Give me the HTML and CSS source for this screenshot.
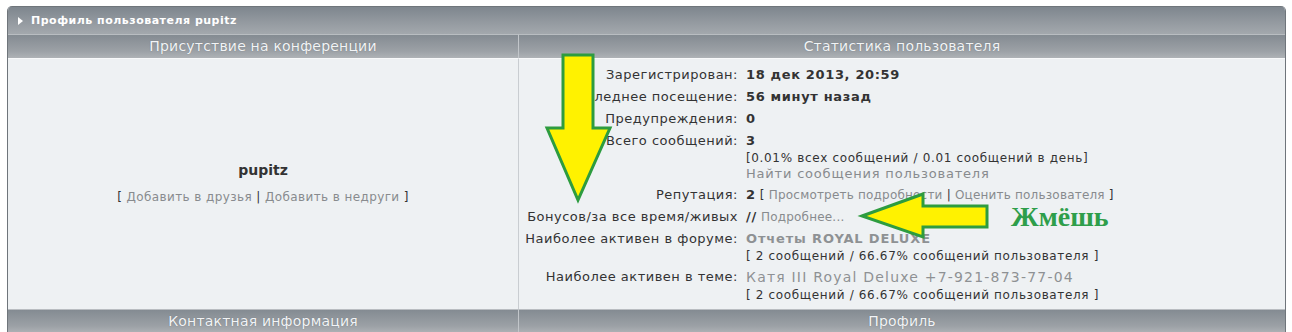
FILE: index.html
```html
<!DOCTYPE html>
<html lang="ru">

<head>
    <meta charset="UTF-8">
    <title>Профиль пользователя pupitz</title>
    <link rel="stylesheet" href="styles.css">
</head>

<body>
    <div class="page">
        <div class="profile">
            <div class="maintitle"><span class="tri"></span>Профиль пользователя pupitz</div>

            <div class="grid">
                <div class="head">Присутствие на конференции</div>
                <div class="head">Статистика пользователя</div>

                <div class="cell presence">
                    <div class="nick">pupitz</div>
                    <div class="links">[ <a href="#">Добавить в друзья</a> | <a href="#">Добавить в недруги</a> ]</div>
                </div>

                <div class="cell stats">
                    <div class="row">
                        <div class="label">Зарегистрирован:</div>
                        <div class="value"><b>18 дек 2013, 20:59</b></div>
                    </div>
                    <div class="row">
                        <div class="label">Последнее посещение:</div>
                        <div class="value"><b>56 минут назад</b></div>
                    </div>
                    <div class="row">
                        <div class="label">Предупреждения:</div>
                        <div class="value"><b>0</b></div>
                    </div>
                    <div class="row">
                        <div class="label">Всего сообщений:</div>
                        <div class="value">
                            <b>3</b>
                            <div class="sub">[0.01% всех сообщений / 0.01 сообщений в день]</div>
                            <div class="sub"><a class="find" href="#">Найти сообщения пользователя</a></div>
                        </div>
                    </div>
                    <div class="row">
                        <div class="label">Репутация:</div>
                        <div class="value"><b>2</b> <span class="small">[ <a href="#">Просмотреть подробности</a> | <a href="#">Оценить пользователя</a> ]</span></div>
                    </div>
                    <div class="row">
                        <div class="label">Бонусов/за все время/живых</div>
                        <div class="value"><b>//</b> <a class="small" href="#">Подробнее...</a></div>
                    </div>
                    <div class="row">
                        <div class="label">Наиболее активен в форуме:</div>
                        <div class="value">
                            <a class="strong" href="#">Отчеты ROYAL DELUXE</a>
                            <div class="sub">[ 2 сообщений / 66.67% сообщений пользователя ]</div>
                        </div>
                    </div>
                    <div class="row">
                        <div class="label">Наиболее активен в теме:</div>
                        <div class="value">
                            <a class="topic" href="#">Катя III Royal Deluxe +7-921-873-77-04</a>
                            <div class="sub">[ 2 сообщений / 66.67% сообщений пользователя ]</div>
                        </div>
                    </div>
                </div>

                <div class="head">Контактная информация</div>
                <div class="head">Профиль</div>
            </div>
        </div>

        <!-- annotation arrows drawn over the screenshot -->
        <svg class="marks" width="1292" height="332" viewBox="0 0 1292 332">
            <polygon points="563,55 593,55 593,128 610,128 578,200 547,128 563,128"
                fill="#fff200" stroke="#2d9c3f" stroke-width="3" stroke-linejoin="miter" />
            <polygon points="862,216 923,194 923,206 987,206 987,227 923,227 923,237"
                fill="#fff200" stroke="#2d9c3f" stroke-width="3" stroke-linejoin="miter" />
        </svg>
        <div class="note">Жмёшь</div>
    </div>
</body>

</html>
```

FILE: styles.css
```css
body {
    margin: 0;
    background: #fff;
    font-family: 'DejaVu Sans', Verdana, sans-serif;
    color: #222;
}

.page {
    position: relative;
    width: 1292px;
    height: 332px;
    overflow: hidden;
}

.profile {
    margin: 6px 6px 0 7px;
    border-left: 1px solid #6f757b;
    border-right: 1px solid #6f757b;
    border-top-left-radius: 5px;
    border-top-right-radius: 5px;
    overflow: hidden;
}

.maintitle {
    height: 27px;
    line-height: 27px;
    padding-left: 10px;
    color: #fff;
    font-size: 11px;
    font-weight: bold;
    letter-spacing: 0.5px;
    background: linear-gradient(#7e868e, #959ba1 60%, #a3a8ad);
    border-top: 1px solid #6f757b;
    display: flex;
    align-items: center;
}

.tri {
    width: 0;
    height: 0;
    border-left: 5px solid #fff;
    border-top: 4px solid transparent;
    border-bottom: 4px solid transparent;
    margin-right: 8px;
}

.grid {
    display: grid;
    grid-template-columns: 510px 1fr;
}

.head {
    height: 23px;
    line-height: 23px;
    text-align: center;
    color: #f2f4f6;
    font-size: 14px;
    letter-spacing: 0.2px;
    background: linear-gradient(#848b92, #9ca1a6 70%, #aeb2b6);
    border-top: 1px solid #b9bdc1;
    text-shadow: 0 0 1px #6a7076;
}

.head + .head {
    border-left: 1px solid #c2c6ca;
}

.cell {
    background: #eef1f3;
    border-top: 1px solid #f8f9fa;
}

.presence {
    display: flex;
    flex-direction: column;
    justify-content: center;
    align-items: center;
    padding-bottom: 2px;
}

.nick {
    font-size: 14px;
    font-weight: bold;
    color: #333;
    margin-bottom: 12px;
}

.links {
    font-size: 12px;
    letter-spacing: 0.4px;
    color: #333;
}

a {
    color: #888b8e;
    text-decoration: none;
}

.stats {
    border-left: 1px solid #c9cdd1;
    padding: 5px 0 4px 0;
}

.row {
    display: grid;
    grid-template-columns: 219px 1fr;
    column-gap: 8px;
    padding: 2px 0;
    font-size: 13px;
    line-height: 18px;
}

.label {
    text-align: right;
    color: #333;
    letter-spacing: 0.5px;
}

.value b {
    color: #333;
    letter-spacing: 0.65px;
}

.sub {
    font-size: 12px;
    line-height: 16px;
    letter-spacing: 0.65px;
    color: #333;
}

.sub .find {
    font-size: 13px;
    letter-spacing: 0.8px;
}

.small {
    font-size: 12px;
    letter-spacing: 0.2px;
    color: #333;
}

a.small {
    color: #888b8e;
}

.strong {
    font-weight: bold;
    color: #8e9194;
    letter-spacing: 0.85px;
}

.topic {
    color: #8e9194;
    font-size: 14px;
    letter-spacing: 1.2px;
}

.marks {
    position: absolute;
    left: 0;
    top: 0;
}

.note {
    position: absolute;
    left: 1011px;
    top: 201px;
    font-family: 'Liberation Serif', serif;
    font-weight: bold;
    font-size: 28px;
    color: #2e9e4a;
}
```
